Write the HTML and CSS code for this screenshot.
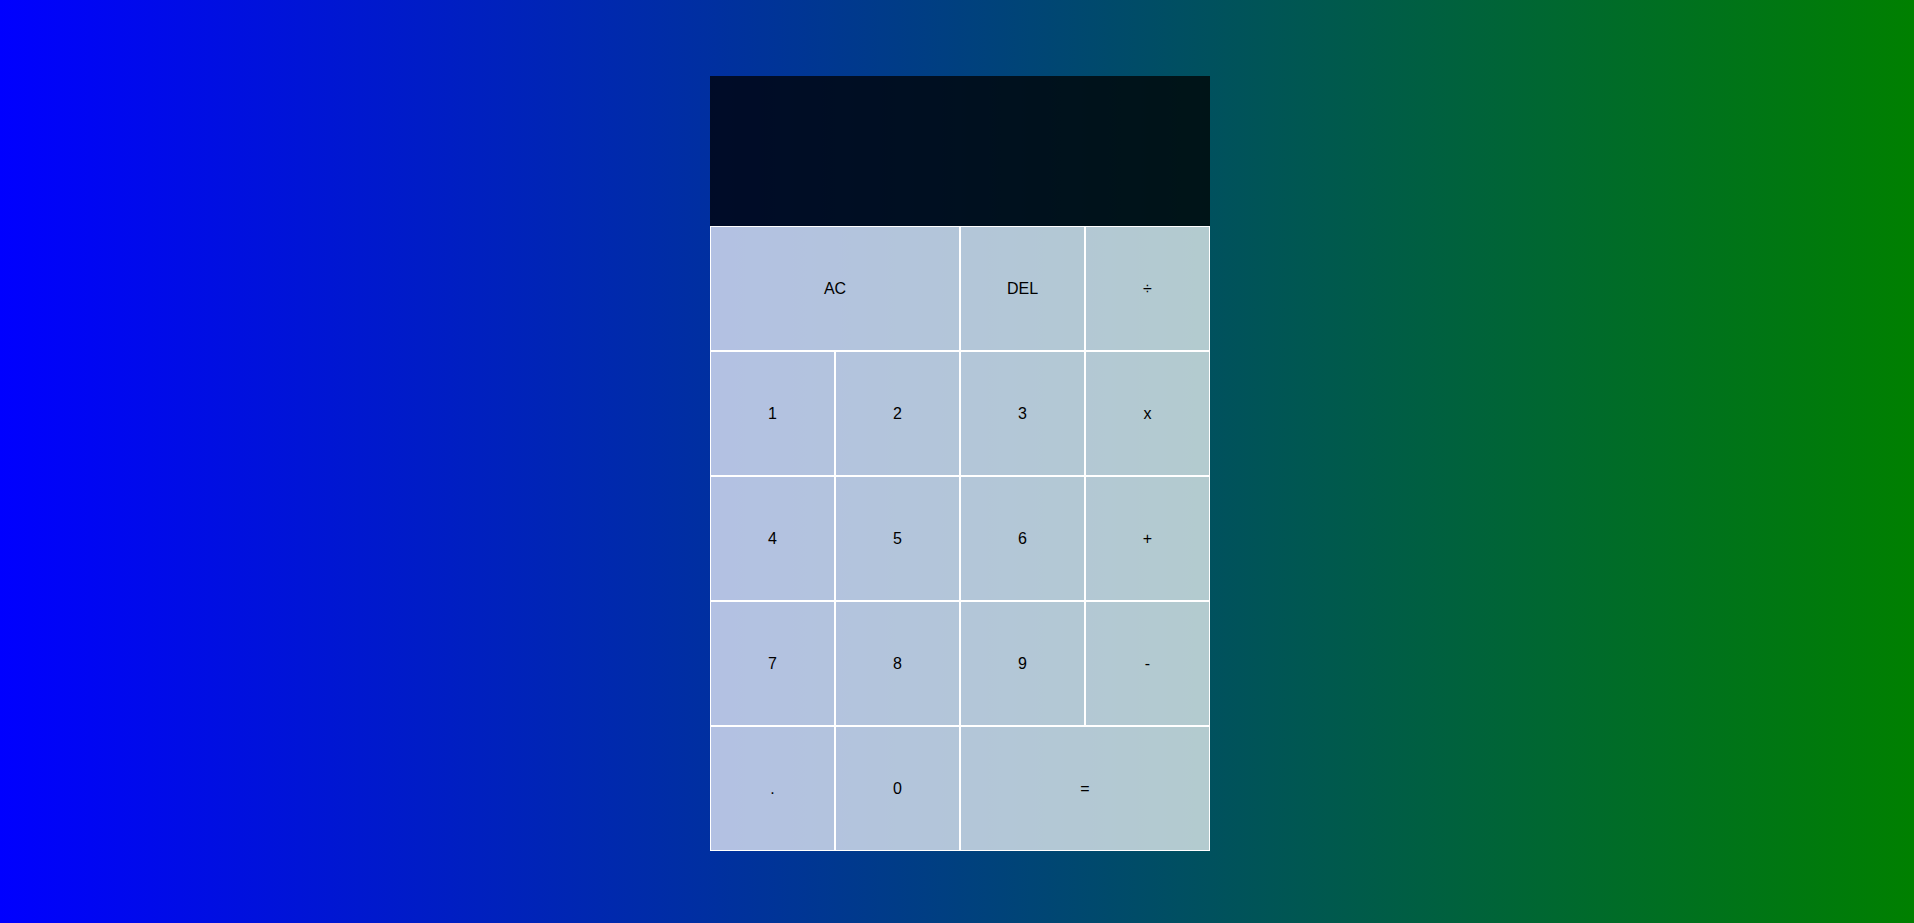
FILE: index.html
```html
<!DOCTYPE html>
<html lang="en">
<head>
    <meta charset="UTF-8">
    <meta name="viewport" content="width=device-width, initial-scale=1.0">
    <title>Calculator</title>
    <link rel="stylesheet" href="styles.css">
</head>
<body>

<div class="calculator-grid">
    <div class="output">
        <div class="previous-operand"></div>
        <div class="current-operand"></div>
    </div>
    <button class="span-two">AC</button>
    <button>DEL</button>
    <button>÷</button>
    <button>1</button>
    <button>2</button>
    <button>3</button>
    <button>x</button>
    <button>4</button>
    <button>5</button>
    <button>6</button>
    <button>+</button>
    <button>7</button>
    <button>8</button>
    <button>9</button>
    <button>-</button>
    <button>.</button>
    <button>0</button>
    <button class="span-two">=</button>
</div>

</body>
</html>
```

FILE: styles.css
```css
*, *::before, *::after {
    box-sizing: border-box;
}

body {
    margin: 0;
    padding: 0;
    min-height: 100vh;
    background: linear-gradient(to right, blue, green);
    font-family: 'Liberation Sans', Arial, sans-serif;
}

.calculator-grid {
    display: grid;
    justify-content: center;
    align-content: start;
    padding: 76px 0 0 6px;
    grid-template-columns: repeat(4, 125px);
    grid-template-rows: 150px repeat(5, 125px);
}

.calculator-grid > button {
    cursor: pointer;
    font-family: 'Liberation Sans', Arial, sans-serif;
    font-size: 16px;
    color: #000;
    border: 1px solid white;
    outline: none;
    background-color: rgba(255, 255, 255, .7);
}

.calculator-grid > button:hover {
    background-color: rgba(255, 255, 255, .9);
}

.span-two {
    grid-column: span 2;
}

.output {
    grid-column: 1 / -1;
    background-color: rgba(0, 0, 0, .75);
    display: flex;
    align-items: flex-end;
    justify-content: space-around;
    flex-direction: column;
    padding: 10px;
    word-wrap: break-word;
    word-break: break-all;
}

.output .previous-operand {
    color: rgba(255, 255, 255, .75);
    font-size: 1.5rem;
}

.output .current-operand {
    color: white;
    font-size: 2.5rem;
}
```
